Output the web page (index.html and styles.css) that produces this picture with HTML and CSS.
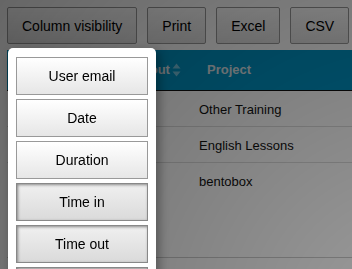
FILE: index.html
```html
<!DOCTYPE html>
<html lang="en">
<head>
<meta charset="utf-8">
<title>Timesheet</title>
<link rel="stylesheet" href="styles.css">
</head>
<body>
<div class="page">
  <div class="dt-buttons">
    <button class="dt-button">Column visibility</button>
    <button class="dt-button">Print</button>
    <button class="dt-button">Excel</button>
    <button class="dt-button">CSV</button>
  </div>
  <table class="data-table">
    <colgroup>
      <col class="col-time">
      <col class="col-time">
      <col class="col-project">
    </colgroup>
    <thead>
      <tr>
        <th><div class="th-inner"><span>Time in</span><svg class="sort" viewBox="0 0 9 14" width="9" height="14"><path d="M0.5 5.5L4.5 0.5L8.5 5.5Z M0.5 8.5L8.5 8.5L4.5 13.5Z"/></svg></div></th>
        <th><div class="th-inner"><span>Time out</span><svg class="sort" viewBox="0 0 9 14" width="9" height="14"><path d="M0.5 5.5L4.5 0.5L8.5 5.5Z M0.5 8.5L8.5 8.5L4.5 13.5Z"/></svg></div></th>
        <th>Project</th>
      </tr>
    </thead>
    <tbody>
      <tr><td>09:00</td><td>10:30</td><td>Other Training</td></tr>
      <tr><td>11:00</td><td>12:15</td><td>English Lessons</td></tr>
      <tr class="tall"><td>13:00</td><td>17:45</td><td>bentobox</td></tr>
    </tbody>
  </table>
</div>
<div class="dt-button-background"></div>
<div class="dt-button-collection">
  <button class="coll-button">User email</button>
  <button class="coll-button">Date</button>
  <button class="coll-button">Duration</button>
  <button class="coll-button active">Time in</button>
  <button class="coll-button active">Time out</button>
  <button class="coll-button active">Project</button>
</div>
</body>
</html>
```
FILE: styles.css
```css
html, body {
  margin: 0;
  padding: 0;
  background: #fff;
  overflow: hidden;
  font-family: "Liberation Sans", Arial, Helvetica, sans-serif;
  color: #111;
}

.page {
  width: 600px;
  padding: 7px 0 0 7px;
}

.dt-buttons {
  display: flex;
  gap: 10px;
  margin-bottom: 6px;
}

.dt-button {
  height: 37px;
  padding: 0 14px;
  border: 1px solid #999;
  border-radius: 2px;
  background: linear-gradient(to bottom, #ffffff 0%, #e0e0e0 100%);
  font-family: inherit;
  font-size: 14px;
  color: #000;
  white-space: nowrap;
}

.data-table {
  border-collapse: collapse;
  table-layout: fixed;
  width: 500px;
  font-size: 13px;
}

.col-time { width: 91px; }
.col-project { width: 318px; }

.data-table th {
  background: #0092c2;
  color: #d8e2e8;
  font-weight: bold;
  text-align: left;
  height: 40px;
  padding: 0 8px 0 18px;
  border-bottom: 1px solid #111;
  box-sizing: border-box;
}

.th-inner {
  display: flex;
  align-items: center;
  gap: 2px;
}

.sort {
  fill: rgba(255, 255, 255, 0.45);
  flex: none;
  margin-left: auto;
}

.data-table td {
  padding: 11px 10px 9px;
  line-height: 15px;
  vertical-align: top;
  border-top: 1px solid #ddd;
}

.data-table tr.tall td {
  height: 74px;
  border-bottom: 1px solid #ccc;
}

.dt-button-background {
  position: fixed;
  inset: 0;
  background: radial-gradient(circle farthest-corner at 420px 330px, rgba(0, 0, 0, 0.38) 0%, rgba(0, 0, 0, 0.6) 100%);
}

.dt-button-collection {
  position: absolute;
  top: 48px;
  left: 8px;
  width: 132px;
  padding: 9px 8px 8px;
  background: #fff;
  border-radius: 5px;
  box-shadow: 3px 4px 10px 1px rgba(0, 0, 0, 0.3);
  display: flex;
  flex-direction: column;
  gap: 4px;
}

.coll-button {
  height: 38px;
  width: 100%;
  border: 1px solid #999;
  border-radius: 0;
  background: linear-gradient(to bottom, #ffffff 0%, #e6e6e6 100%);
  font-family: inherit;
  font-size: 14px;
  color: #000;
}

.coll-button.active {
  background: linear-gradient(to bottom, #f0f0f0 0%, #dadada 100%);
  box-shadow: inset 1px 1px 3px #888;
  border-color: #888;
}
```
